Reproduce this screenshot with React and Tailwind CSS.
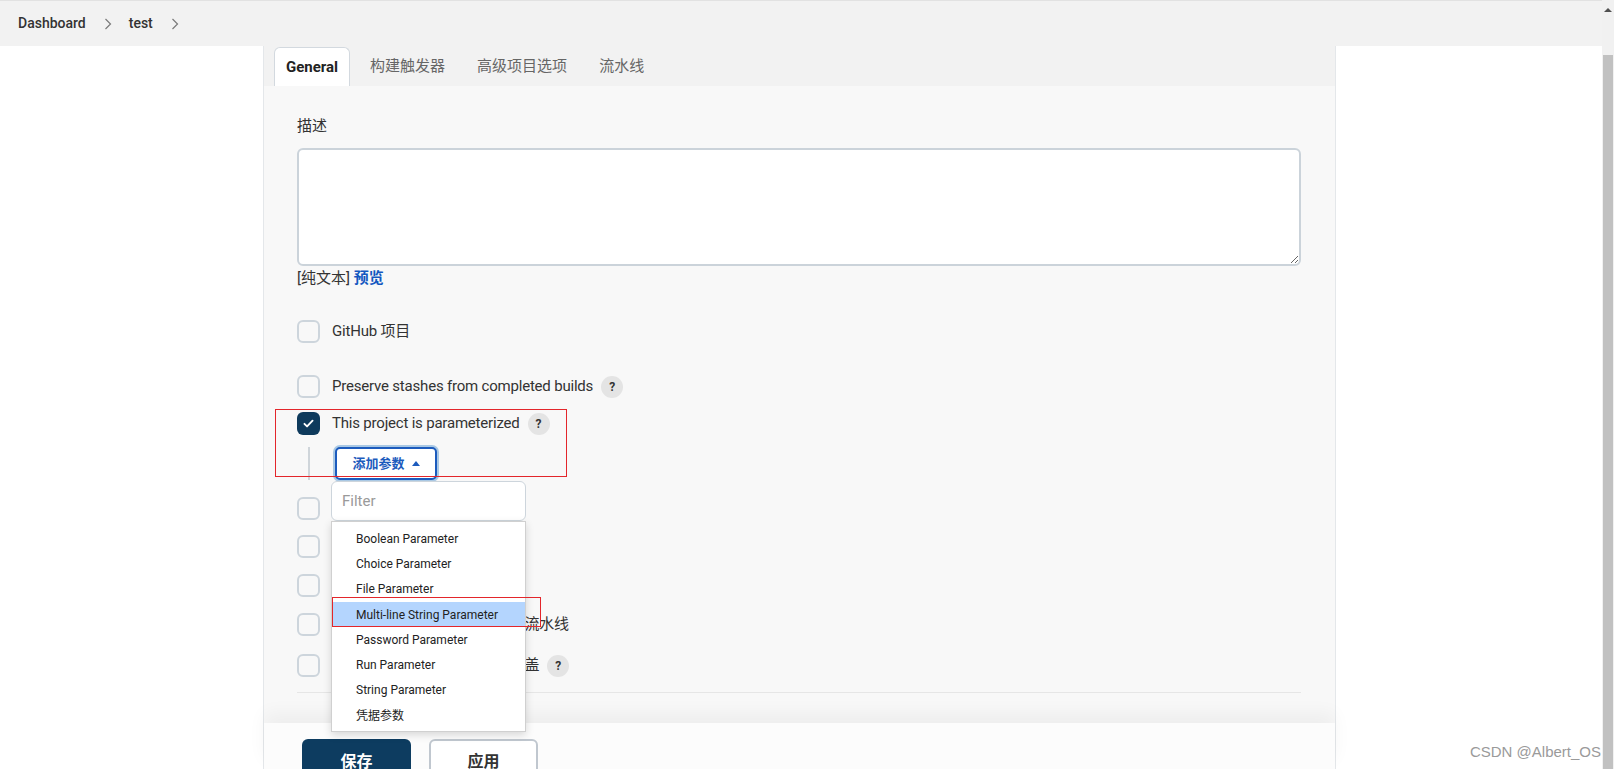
import React from 'react'

// small pieces
const Box = ({ checked }) =>
  checked ? (
    <span className="flex h-[23px] w-[23px] shrink-0 items-center justify-center rounded-[6px] bg-[#0e3a5c]">
      <svg viewBox="0 0 24 24" className="h-[15px] w-[15px]" fill="none" stroke="white" strokeWidth={3} strokeLinecap="round" strokeLinejoin="round">
        <path d="M5.5 12.5l4.2 4.2L18.5 7.5" />
      </svg>
    </span>
  ) : (
    <span className="h-[23px] w-[23px] shrink-0 rounded-[6px] border-2 border-[#cdd5dc]" />
  )

const Help = () => (
  <span className="flex h-[22px] w-[22px] shrink-0 items-center justify-center rounded-full bg-[#e4e4e4] text-[12px] font-bold text-[#333]">?</span>
)

const Row = ({ label, checked, help, className = '' }) => (
  <div className={'flex h-[23px] items-center ' + className}>
    <Box checked={checked} />
    {label && <span className="ml-[12px] whitespace-nowrap text-[15px] tracking-[-0.2px] text-[#333]">{label}</span>}
    {help && <span className="ml-[8px]"><Help /></span>}
  </div>
)

const Chevron = () => (
  <svg viewBox="0 0 8 12" className="h-[12px] w-[8px]" fill="none" stroke="#7a7a7a" strokeWidth={1.2}>
    <path d="M1.5 1l5 5-5 5" />
  </svg>
)

const params = [
  'Boolean Parameter',
  'Choice Parameter',
  'File Parameter',
  'Multi-line String Parameter',
  'Password Parameter',
  'Run Parameter',
  'String Parameter',
  '凭据参数',
]

export default function App() {
  return (
    <div className="flex h-[769px] w-full overflow-hidden bg-white font-['Roboto','Noto_Sans_CJK_SC',sans-serif]">
      <div className="relative flex min-w-0 flex-1 flex-col">
        {/* breadcrumb bar */}
        <header className="flex h-[46px] shrink-0 items-center border-t border-[#e2e2e2] bg-[#f2f2f2] pl-[18px] text-[14px] font-medium text-[#333]">
          <span>Dashboard</span>
          <span className="ml-[18px]"><Chevron /></span>
          <span className="ml-[17px]">test</span>
          <span className="ml-[18px]"><Chevron /></span>
        </header>

        <div className="flex min-h-0 flex-1">
          <div className="w-[263px] shrink-0" />

          <div className="relative flex w-[1073px] shrink-0 flex-col border-x border-[#e4e7ea] bg-[#f8f8f8]">
            {/* tabs */}
            <div className="flex h-[40px] shrink-0 items-end gap-[8px] bg-[#f2f2f2] pl-[10px] text-[15px]">
              <div className="flex h-[39px] items-center rounded-t-[6px] border border-b-0 border-[#d3d9df] bg-white px-[11px] font-bold text-[#222]">General</div>
              <div className="flex h-[39px] items-center px-[12px] text-[#666]">构建触发器</div>
              <div className="flex h-[39px] items-center px-[12px] text-[#666]">高级项目选项</div>
              <div className="flex h-[39px] items-center px-[12px] text-[#666]">流水线</div>
            </div>

            {/* form body */}
            <div className="flex flex-1 flex-col pl-[33px] pt-[30px]">
              <div className="text-[15px] leading-[20px] text-[#333]">描述</div>
              <textarea readOnly className="mt-[12px] h-[118px] w-[1004px] shrink-0 rounded-[6px] border-2 border-[#cbd3da] bg-white outline-none" />
              <div className="mt-[2px] text-[15px] leading-[20px] text-[#333]">
                [纯文本] <span className="font-bold text-[#1457c0]">预览</span>
              </div>

              <Row className="mt-[32px]" label="GitHub 项目" />
              <Row className="mt-[32px]" label="Preserve stashes from completed builds" help />
              <Row className="mt-[14px]" label="This project is parameterized" checked help />

              <div className="mt-[12px] flex items-start">
                <span className="ml-[11px] h-[33px] w-[2px] bg-[#cfd5da]" />
                <div className="relative ml-[25px]">
                  <button className="flex h-[33px] w-[102px] items-center justify-center gap-[7px] rounded-[5px] border-2 border-[#1c5bbd] bg-white text-[13px] font-bold text-[#1c5bbd] ring-2 ring-[#a9c8e4]">
                    添加参数
                    <svg viewBox="0 0 8 5" className="h-[5px] w-[8px]" fill="#1c5bbd"><path d="M0 5L4 0l4 5z" /></svg>
                  </button>
                  {/* dropdown menu */}
                  <div className="absolute left-[-4px] top-full z-20 mt-[1px] w-[195px]">
                    <div className="flex h-[40px] items-center rounded-[6px] border-[1.5px] border-[#cdd5dc] bg-white pl-[10px] text-[15px] text-[#9a9a9a]">Filter</div>
                    <div className="border border-[#d0d0d0] bg-white pb-[3px] pt-[4px] shadow-[0_3px_8px_rgba(0,0,0,0.15)]">
                      {params.map((p, i) => (
                        <div key={p} className={'flex h-[25.3px] items-center pl-[24px] text-[12px] text-[#222] ' + (i === 3 ? 'bg-[#b4d5fe]' : '')}>{p}</div>
                      ))}
                    </div>
                  </div>
                </div>
              </div>

              {/* rows whose labels sit under the open menu */}
              <Row className="mt-[17px]" />
              <Row className="mt-[15px]" />
              <Row className="mt-[16px]" />
              <Row className="mt-[16px]" label="如果控制器重启，不允许恢复流水线" />
              <Row className="mt-[18px]" label="流水线效率、持久保存设置覆盖" help />

              <div className="mt-[15px] h-px w-[1004px] bg-[#e6e6e6]" />
            </div>

            {/* bottom action bar */}
            <div className="relative z-10 flex h-[46px] shrink-0 gap-[18px] bg-[#fcfcfc] pl-[38px] pt-[16px] shadow-[0_-10px_18px_rgba(0,0,0,0.045)]">
              <button className="h-[46px] w-[109px] rounded-[6px] bg-[#0d3c60] text-[16px] font-bold text-white">保存</button>
              <button className="h-[46px] w-[109px] rounded-[6px] border-2 border-[#c0c7cf] bg-white text-[16px] font-bold text-[#333]">应用</button>
            </div>

            {/* annotation boxes */}
            <div className="pointer-events-none absolute left-[11px] top-[363px] z-30 h-[68px] w-[292px] border border-[#e3262b]" />
            <div className="pointer-events-none absolute left-[68px] top-[551px] z-30 h-[30px] w-[209px] border border-[#e3262b]" />
          </div>

          <div className="flex-1" />
        </div>

        <div className="absolute bottom-[8px] right-[1px] z-40 font-['Liberation_Sans',sans-serif] text-[15px] leading-[18px] text-[#9a9a9a]">CSDN @Albert_OS</div>
      </div>

      {/* scrollbar */}
      <div className="flex w-[12px] shrink-0 flex-col bg-[#f1f1f1]">
        <div className="flex h-[55px] shrink-0 justify-center pt-[8px]">
          <span className="h-0 w-0 border-x-[4px] border-b-[4px] border-x-transparent border-b-[#505050]" />
        </div>
        <div className="mx-[1px] flex-1 bg-[#c1c1c1]" />
      </div>
    </div>
  )
}
